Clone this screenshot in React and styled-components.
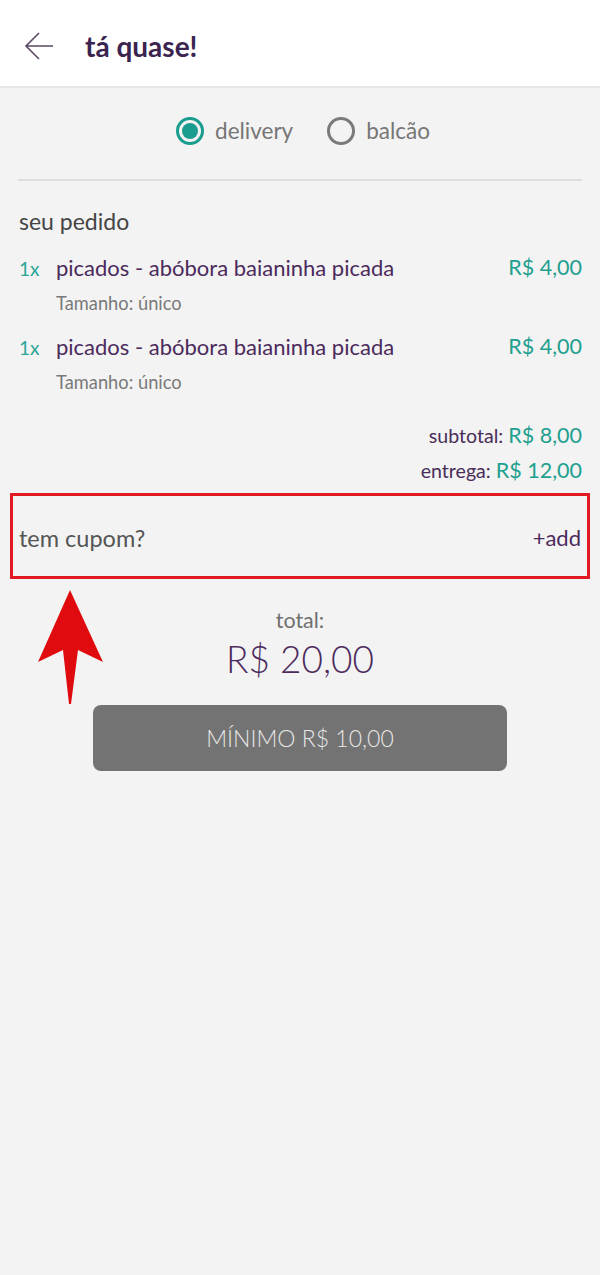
import React from 'react';
import styled, { createGlobalStyle } from 'styled-components';

const GlobalStyle = createGlobalStyle`
	body {
		margin: 0;
		background: #f3f3f3;
		font-family: Lato, "Noto Sans", sans-serif;
	}
`;

const Page = styled.div`
	position: relative;
	width: 600px;
	min-height: 1275px;
	background: #f3f3f3;
`;

const Header = styled.header`
	height: 88px;
	background: #ffffff;
	border-bottom: 2px solid #e6e6e6;
	box-sizing: border-box;
	display: flex;
	align-items: center;
	padding: 6px 0 0 24px;
	gap: 31px;
`;

const BackButton = styled.div`
	display: flex;
	align-items: center;
	color: #5a4a66;
`;

const Title = styled.h1`
	margin: 0;
	font-size: 28px;
	line-height: 34px;
	font-weight: 700;
	color: #3b2450;
`;

const Content = styled.main`
	padding: 0 18px;
`;

const RadioGroup = styled.div`
	display: flex;
	justify-content: center;
	gap: 34px;
	padding: 29px 0 34px 6px;
	border-bottom: 2px solid #dedede;
`;

const RadioOption = styled.label`
	display: flex;
	align-items: center;
	gap: 11px;
	font-size: 22.5px;
	line-height: 28px;
	color: #767676;
`;

const RadioCircle = styled.span`
	width: 28px;
	height: 28px;
	box-sizing: border-box;
	border-radius: 50%;
	border: 3px solid ${(props) => (props.checked ? '#1a9c8f' : '#7a7a7a')};
	padding: 3px;
	display: flex;
	&::after {
		content: '';
		flex: 1;
		border-radius: 50%;
		background: ${(props) => (props.checked ? '#1a9c8f' : 'transparent')};
	}
`;

const SectionTitle = styled.h2`
	margin: 26px 1px 0;
	font-size: 23px;
	line-height: 28px;
	font-weight: 400;
	color: #454545;
`;

const ItemList = styled.div`
	margin-top: 18px;
	display: flex;
	flex-direction: column;
	gap: 17px;
`;

const Item = styled.div`
	display: grid;
	grid-template-columns: 38px 1fr auto;
	grid-template-rows: 28px 24px;
	row-gap: 10px;
	align-items: center;
`;

const Qty = styled.span`
	font-size: 19px;
	color: #2aa597;
	padding: 2px 0 0 1px;
`;

const ItemName = styled.span`
	font-size: 22px;
	color: #4b2a5c;
`;

const Price = styled.span`
	font-size: 21.5px;
	color: #1f9f8f;
`;

const ItemDetail = styled.span`
	grid-column: 2 / 4;
	font-size: 18.3px;
	color: #797979;
`;

const Totals = styled.div`
	margin-top: 27px;
	display: flex;
	flex-direction: column;
	align-items: flex-end;
	gap: 6px;
`;

const TotalLine = styled.div`
	line-height: 28px;
	font-size: 19.6px;
	color: #4a2d5a;
	& > span {
		font-size: 21.5px;
		color: #1f9f8f;
	}
`;

const CouponBox = styled.div`
	margin: 8px -8px 0;
	height: 86px;
	box-sizing: border-box;
	border: 3px solid #e01b22;
	display: flex;
	align-items: center;
	justify-content: space-between;
	padding: 3px 6px 0 6px;
`;

const CouponLabel = styled.span`
	font-size: 23.5px;
	color: #555555;
`;

const AddLink = styled.span`
	font-size: 22px;
	color: #4b2a5c;
`;

const TotalBlock = styled.div`
	margin-top: 28px;
	display: flex;
	flex-direction: column;
	align-items: center;
`;

const TotalLabel = styled.span`
	font-size: 21.5px;
	line-height: 26px;
	color: #6f6f6f;
`;

const TotalValue = styled.span`
	margin-top: 4px;
	font-size: 37px;
	line-height: 44px;
	font-weight: 300;
	color: #4b2a5c;
`;

const MinButton = styled.button`
	display: block;
	margin: 24px auto 0;
	width: 414px;
	height: 66px;
	border: none;
	border-radius: 8px;
	background: #737373;
	color: #e6e6e6;
	font-family: inherit;
	font-size: 23px;
	font-weight: 300;
`;

const ArrowMark = styled.svg`
	position: absolute;
	left: 38px;
	top: 588px;
`;

const App = () => (
	<Page>
		<GlobalStyle />
		<Header>
			<BackButton>
				<svg width="30" height="28" viewBox="0 0 30 28" fill="none" stroke="currentColor" strokeWidth="1.6">
					<path d="M29 14H2M15 1L2 14l13 13" />
				</svg>
			</BackButton>
			<Title>tá quase!</Title>
		</Header>
		<Content>
			<RadioGroup>
				<RadioOption>
					<RadioCircle checked />
					delivery
				</RadioOption>
				<RadioOption>
					<RadioCircle />
					balcão
				</RadioOption>
			</RadioGroup>
			<SectionTitle>seu pedido</SectionTitle>
			<ItemList>
				{[1, 2].map((i) => (
					<Item key={i}>
						<Qty>1x</Qty>
						<ItemName>picados - abóbora baianinha picada</ItemName>
						<Price>R$ 4,00</Price>
						<ItemDetail>Tamanho: único</ItemDetail>
					</Item>
				))}
			</ItemList>
			<Totals>
				<TotalLine>
					subtotal: <span>R$ 8,00</span>
				</TotalLine>
				<TotalLine>
					entrega: <span>R$ 12,00</span>
				</TotalLine>
			</Totals>
			<CouponBox>
				<CouponLabel>tem cupom?</CouponLabel>
				<AddLink>+add</AddLink>
			</CouponBox>
			<TotalBlock>
				<TotalLabel>total:</TotalLabel>
				<TotalValue>R$ 20,00</TotalValue>
			</TotalBlock>
			<MinButton>MÍNIMO R$ 10,00</MinButton>
		</Content>
		<ArrowMark width="66" height="118" viewBox="0 0 66 118">
			<path d="M32 2L0 74L25 62L31 116h2L40 62L65 74Z" fill="#e00b0e" />
		</ArrowMark>
	</Page>
);

export default App;
